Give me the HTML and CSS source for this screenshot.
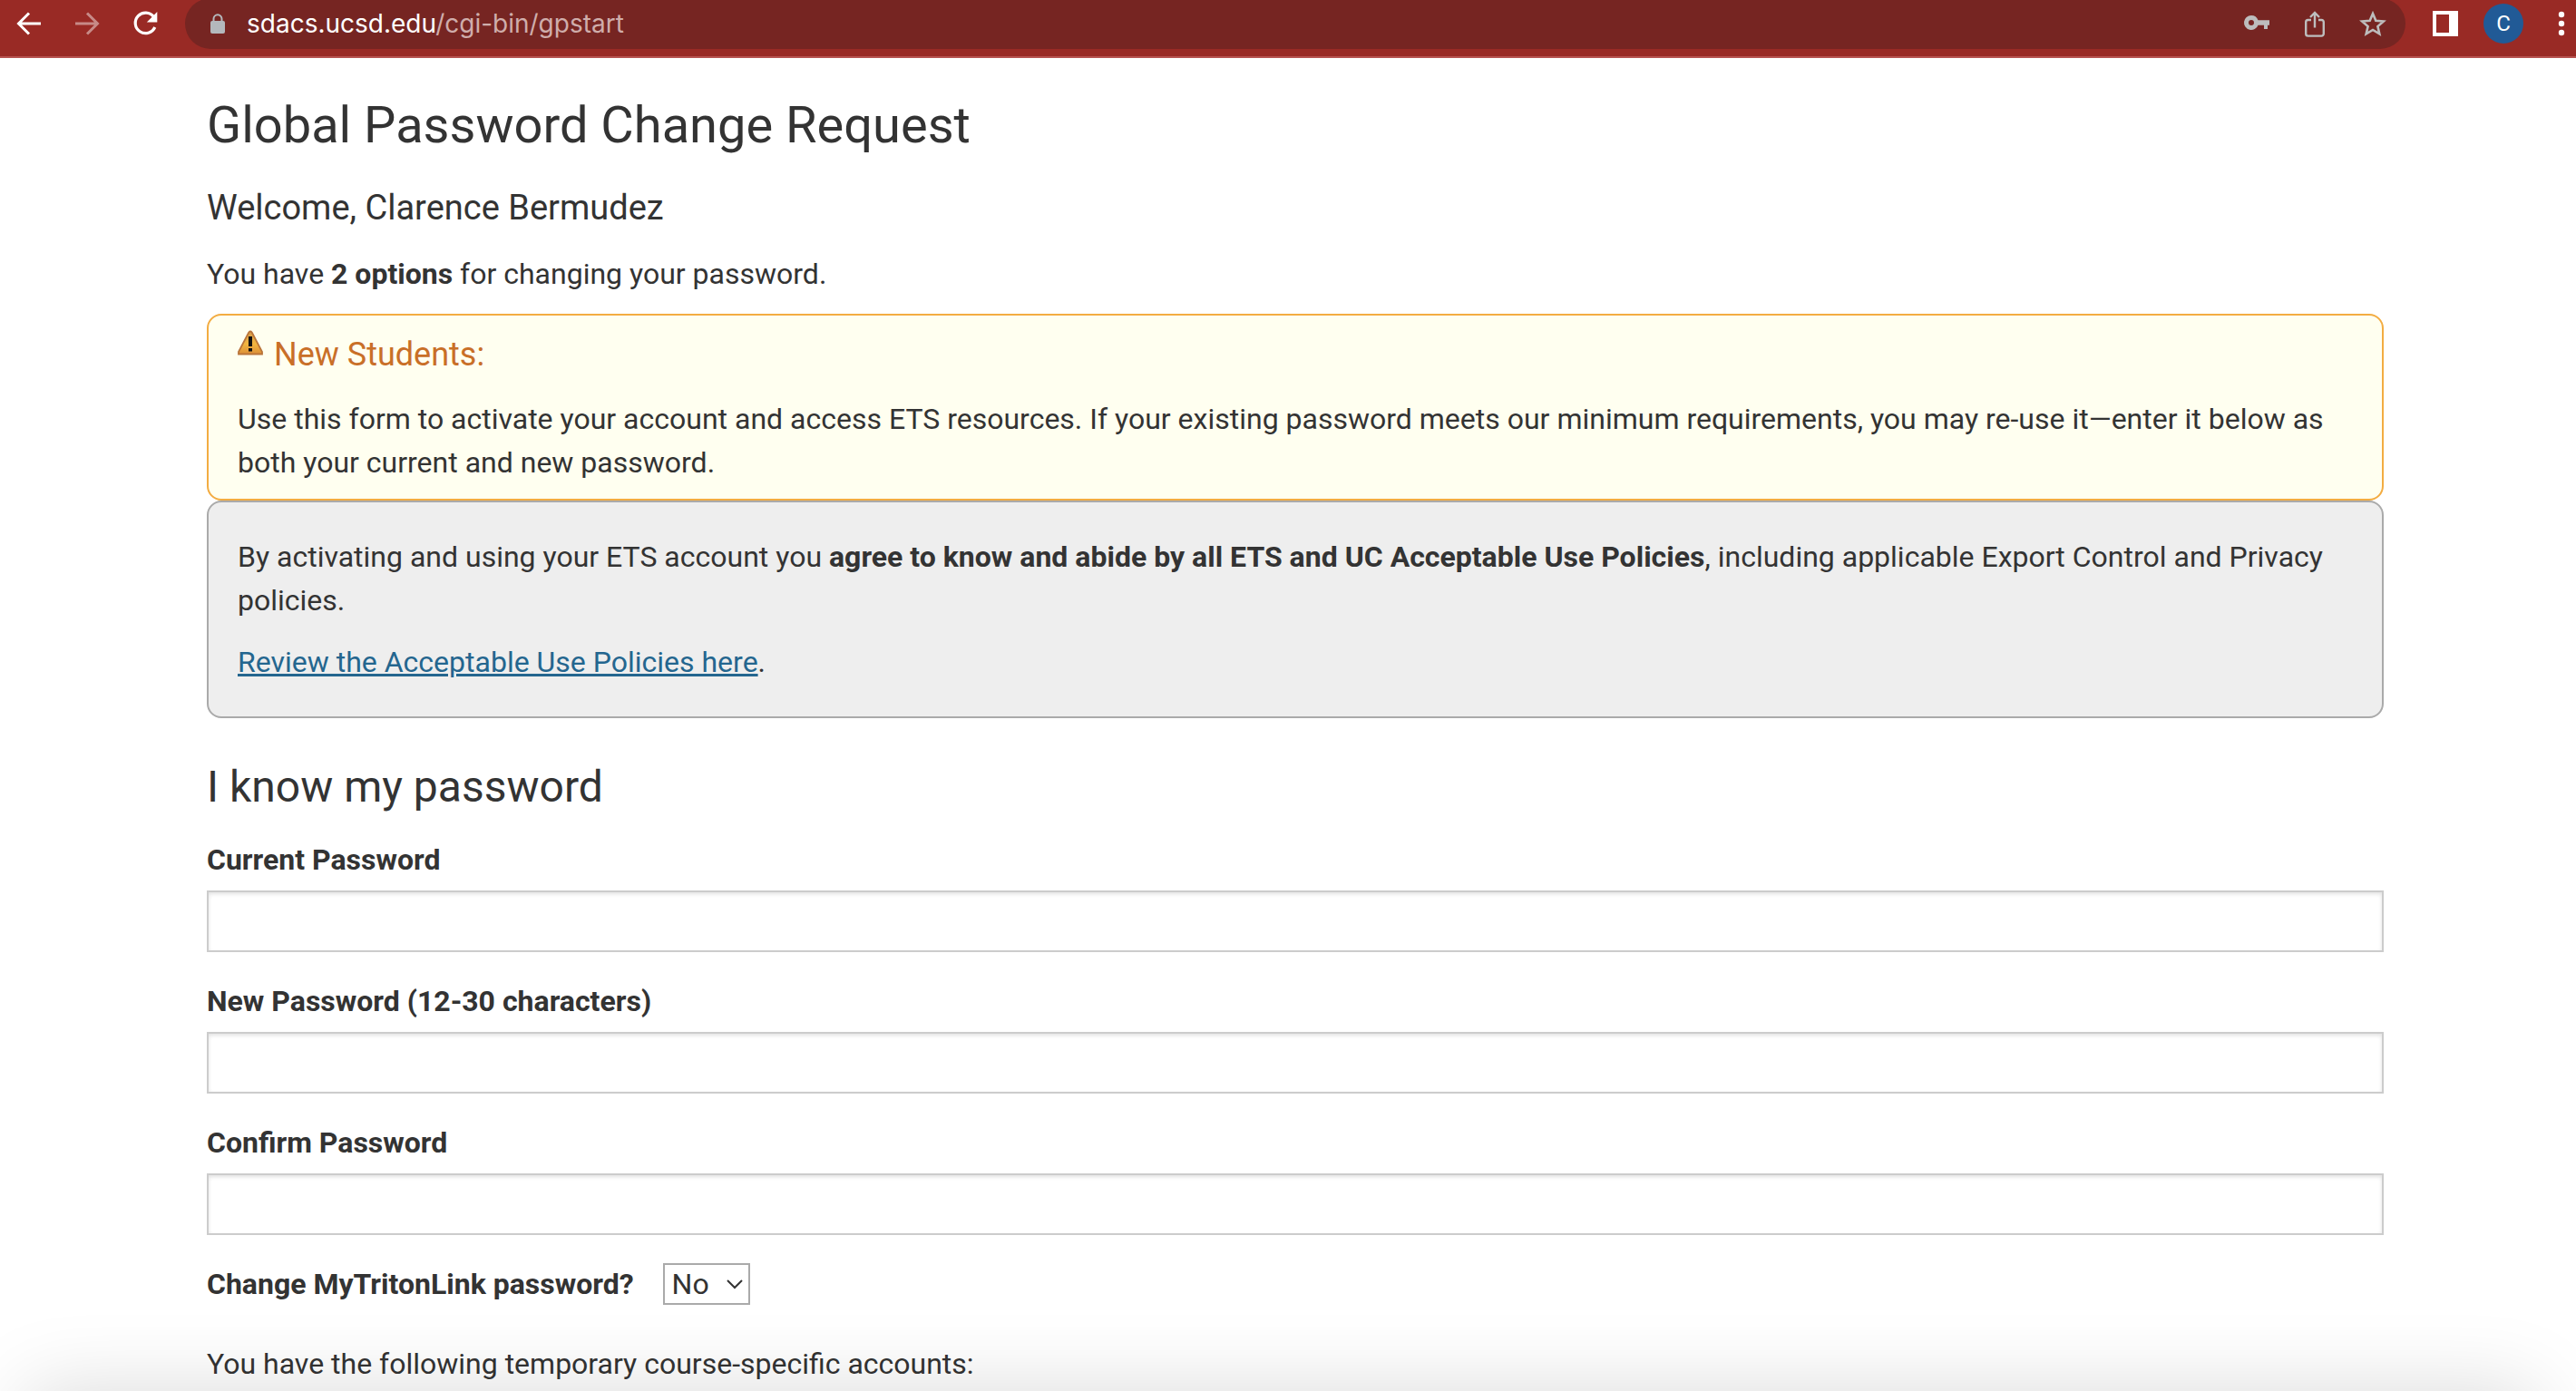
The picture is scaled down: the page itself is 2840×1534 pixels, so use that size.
FILE: index.html
```html
<!DOCTYPE html>
<html lang="en">
<head>
<meta charset="utf-8">
<title>Global Password Change Request</title>
<link rel="stylesheet" href="styles.css">
</head>
<body>
<header class="toolbar">
  <nav class="nav">
    <button class="icon-button" type="button" aria-label="Back">
      <svg viewBox="0 0 32 32"><path d="M29 16H5M16 4.500 4.500 16 16 27.500" fill="none" stroke="#fff" stroke-width="3"/></svg>
    </button>
    <button class="icon-button dim" type="button" aria-label="Forward">
      <svg viewBox="0 0 32 32"><path d="M3 16h24M16 4.500 27.500 16 16 27.500" fill="none" stroke="#fff" stroke-width="3"/></svg>
    </button>
    <button class="icon-button" type="button" aria-label="Reload">
      <svg viewBox="0 0 32 32"><path d="M25.500 8.500A11.300 11.300 0 1 0 26.800 20" fill="none" stroke="#fff" stroke-width="3.200"/><path d="M29.300 3v11.500H17.800z" fill="#fff"/></svg>
    </button>
  </nav>
  <div class="address">
    <svg class="icon" viewBox="0 0 32 32" aria-hidden="true"><rect x="8" y="13" width="16" height="14" rx="2" fill="#b4b8bc"/><path d="M11.500 14v-3.200a4.500 4.500 0 0 1 9 0V14" fill="none" stroke="#b4b8bc" stroke-width="2"/></svg>
    <div class="url"><span class="host">sdacs.ucsd.edu</span>/cgi-bin/gpstart</div>
    <div class="actions">
      <button class="icon-button" type="button" aria-label="Passwords">
        <svg viewBox="0 0 32 32"><path fill="#bdbdbd" fill-rule="evenodd" d="M10 7a8 8 0 1 0 7.500 10.700H24V22h4v-4.300h2v-5.400H17.500A8 8 0 0 0 10 7zm0 5a3 3 0 1 1 0 6 3 3 0 0 1 0-6z"/></svg>
      </button>
      <button class="icon-button" type="button" aria-label="Share">
        <svg viewBox="0 0 32 32"><path fill="none" stroke="#bdbdbd" stroke-width="2.400" d="M12 12H8.500a2.300 2.300 0 0 0-2.300 2.300v13a2.300 2.300 0 0 0 2.300 2.300h15a2.300 2.300 0 0 0 2.300-2.300v-13a2.300 2.300 0 0 0-2.300-2.300H20M16 20.500V4.500M11 9l5-5 5 5"/></svg>
      </button>
      <button class="icon-button" type="button" aria-label="Bookmark this page">
        <svg viewBox="0 0 32 32"><path fill="none" stroke="#bdbdbd" stroke-width="2.600" d="M16 5l3.300 7.800 8.500.7-6.400 5.600 1.900 8.200L16 22.900l-7.300 4.400 1.900-8.200-6.400-5.600 8.500-.7z"/></svg>
      </button>
    </div>
  </div>
  <div class="window-actions">
    <button class="icon-button" type="button" aria-label="Side panel">
      <svg viewBox="0 0 32 32"><path fill="#fff" fill-rule="evenodd" d="M2 2h28v28H2zM6 6v20h14V6z"/></svg>
    </button>
    <button class="avatar" type="button">C</button>
    <button class="icon-button" type="button" aria-label="Menu">
      <svg viewBox="0 0 32 32" fill="#fff"><circle cx="16" cy="6" r="3.200"/><circle cx="16" cy="16" r="3.200"/><circle cx="16" cy="26" r="3.200"/></svg>
    </button>
  </div>
</header>

<main class="page">
  <h1>Global Password Change Request</h1>
  <h3 class="welcome">Welcome, Clarence Bermudez</h3>
  <p>You have <strong>2 options</strong> for changing your password.</p>

  <section class="box box-warning">
    <h4 class="warning-title">
      <svg class="warning-icon" viewBox="0 0 28 28" aria-hidden="true">
        <defs><linearGradient id="amber" x1="0" y1="0" x2="0" y2="1"><stop offset="0" stop-color="#d59a4c"/><stop offset=".55" stop-color="#f2b63f"/><stop offset="1" stop-color="#dc8f38"/></linearGradient></defs>
        <path d="M12.300 2.500q1.700-2 3.400 0L27 24v2.500H1V24z" fill="url(#amber)" stroke="#b9743a" stroke-width="1.800"/>
        <path d="M12 7h4v11h-4zM12 20h4v3.500h-4z" fill="#111"/>
      </svg>
      New Students:
    </h4>
    <p>Use this form to activate your account and access ETS resources. If your existing password meets our minimum requirements, you may re-use it—enter it below as both your current and new password.</p>
  </section>

  <section class="box box-info">
    <p>By activating and using your ETS account you <strong>agree to know and abide by all ETS and UC Acceptable Use Policies</strong>, including applicable Export Control and Privacy policies.</p>
    <p><a href="#policies">Review the Acceptable Use Policies here</a>.</p>
  </section>

  <h2>I know my password</h2>
  <form>
    <div class="field">
      <label for="current">Current Password</label>
      <input id="current" type="password">
    </div>
    <div class="field">
      <label for="new">New Password (12-30 characters)</label>
      <input id="new" type="password">
    </div>
    <div class="field">
      <label for="confirm">Confirm Password</label>
      <input id="confirm" type="password">
    </div>
    <div class="field-inline">
      <label for="triton">Change MyTritonLink password?</label>
      <select id="triton"><option>No</option><option>Yes</option></select>
    </div>
  </form>
  <p>You have the following temporary course-specific accounts:</p>
</main>
<div class="bottom-shade"></div>
</body>
</html>
```
FILE: styles.css
```css
* {
  box-sizing: border-box;
}

body {
  margin: 0;
  background: #fff;
  color: #333;
  font: 32px/48px Roboto, "Liberation Sans", sans-serif;
}

h1, h2, h3, h4, p {
  margin: 0;
  font-weight: 400;
}

button {
  padding: 0;
  border: 0;
  background: none;
}

/* Browser toolbar */
.toolbar {
  display: flex;
  align-items: center;
  height: 64px;
  padding: 0 0 10px 16px;
  background: #992a25;
  border-bottom: 2px solid #b65350;
}

.nav,
.actions {
  display: flex;
  gap: 32px;
}

.window-actions {
  display: flex;
  align-items: center;
  gap: 26px;
}

.icon-button,
.icon {
  display: block;
  flex: none;
  width: 32px;
  height: 32px;
}

.icon-button svg {
  display: block;
  width: 100%;
  height: 100%;
}

.dim {
  opacity: 0.45;
}

.address {
  display: flex;
  flex: 1;
  align-items: center;
  gap: 16px;
  height: 56px;
  margin: -2px 28px;
  padding: 0 20px;
  border-radius: 28px;
  background: #762522;
}

.url {
  flex: 1;
  color: #cfadab;
  font-family: Inter, Roboto, sans-serif;
  font-size: 28px;
  line-height: 32px;
}

.host {
  color: #fff;
}

.avatar {
  width: 44px;
  height: 44px;
  border-radius: 50%;
  background: #215a96;
  color: #fff;
  font: 24px/44px Roboto, sans-serif;
}

/* Page content */
.page {
  padding: 40px 212px 0 228px;
}

h1 {
  margin-bottom: 32px;
  font-size: 56px;
  line-height: 68px;
}

h2 {
  margin: 48px 0 28px;
  font-size: 48px;
  line-height: 56px;
}

.welcome {
  margin-bottom: 24px;
  font-size: 38px;
  line-height: 50px;
}

.box {
  margin-top: 20px;
  border: 2px solid;
  border-radius: 16px;
}

.box-warning {
  padding: 16px 32px;
  border-color: #f3ac42;
  background: #fffff0;
}

.warning-title {
  display: flex;
  gap: 12px;
  margin-bottom: 20px;
  color: #c96f28;
  font-size: 36px;
  line-height: 54px;
}

.warning-icon {
  width: 28px;
  height: 28px;
}

.box-info {
  margin-top: 0;
  padding: 36px 32px;
  border-color: #aaa;
  background: #eee;
}

.box-info p + p {
  margin-top: 20px;
}

a {
  color: #24668f;
}

label {
  font-weight: 700;
}

.field {
  display: flex;
  flex-direction: column;
  gap: 10px;
  margin-bottom: 30px;
}

.field input {
  width: 100%;
  height: 68px;
  padding: 0 16px;
  border: 2px solid #ccc;
  border-radius: 0;
  background: #fff;
  box-shadow: inset 0 2px 4px rgba(0, 0, 0, 0.12);
  font: inherit;
}

.field-inline {
  display: flex;
  align-items: center;
  gap: 32px;
  margin-bottom: 40px;
}

select {
  appearance: none;
  width: 96px;
  height: 46px;
  padding: 0 8px;
  border: 2px solid #aaa;
  border-radius: 0;
  background: #fff url("data:image/svg+xml,%3Csvg xmlns='http://www.w3.org/2000/svg' width='20' height='12'%3E%3Cpath d='M2 2l8 8 8-8' fill='none' stroke='%23333' stroke-width='2'/%3E%3C/svg%3E") no-repeat right 5px center;
  color: #333;
  font: inherit;
  line-height: 40px;
}

/* Soft shade rising from the lower window edge */
.bottom-shade {
  position: fixed;
  right: 44px;
  bottom: -200px;
  left: 30px;
  height: 200px;
  box-shadow: 0 0 90px rgba(0, 0, 0, 0.15);
  pointer-events: none;
}
```
